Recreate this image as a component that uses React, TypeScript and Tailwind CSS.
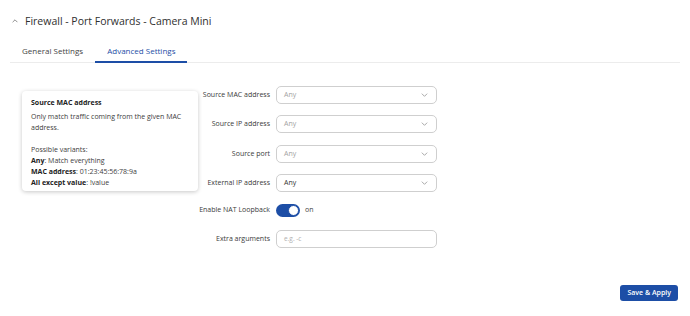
import React from "react";

const font = { fontFamily: '"Open Sans", "Noto Sans", sans-serif' };

function Chevron({ up = false, className = "" }: { up?: boolean; className?: string }) {
  return (
    <svg viewBox="0 0 10 6" className={className} fill="none" stroke="currentColor" strokeWidth="1.1">
      {up ? <polyline points="1,5 5,1 9,5" /> : <polyline points="1,1 5,5 9,1" />}
    </svg>
  );
}

function Select({ value, muted = true }: { value: string; muted?: boolean }) {
  return (
    <div className="flex h-[18px] w-[161px] items-center justify-between rounded-[5px] border border-[#cfcfcf] bg-white pl-[7px] pr-[8px]">
      <span className={`text-[7px] ${muted ? "text-[#a3a3a3]" : "text-[#333]"}`}>{value}</span>
      <Chevron className="h-[4px] w-[7px] text-[#8a8a8a]" />
    </div>
  );
}

function Row({
  label,
  children,
  h = "h-[18px]",
  extra = "",
}: {
  label: string;
  children: React.ReactNode;
  h?: string;
  extra?: string;
}) {
  return (
    <div className={`flex ${h} items-center ${extra}`}>
      <div className="flex w-[72px] shrink-0 justify-end whitespace-nowrap text-[7px] text-[#3a3a3a]">
        {label}
      </div>
      <div className="ml-[6px]">{children}</div>
    </div>
  );
}

export default function App() {
  return (
    <div style={font} className="flex h-[316px] w-[690px] flex-col bg-white text-[#333]">
      {/* Header */}
      <div className="flex items-center pl-[12px] pt-[14px]">
        <Chevron up className="h-[4px] w-[6px] text-[#555]" />
        <span className="ml-[7px] text-[10.5px] leading-[14px] text-[#2f2f2f]">
          Firewall - Port Forwards - Camera Mini
        </span>
      </div>

      {/* Tabs */}
      <div className="mx-[10px] mt-[15px] flex border-b border-[#ececec]">
        <div className="flex h-[19px] items-start px-[12px] pt-[2px] text-[8px] text-[#444]">General Settings</div>
        <div className="-mb-px flex h-[20px] items-start border-b-2 border-[#1d4ea6] px-[12px] pt-[2px] text-[8px] text-[#1d4ea6]">
          Advanced Settings
        </div>
      </div>

      {/* Body */}
      <div className="flex pl-[22px]">
        <div className="mt-[28px] h-[100px] w-[176px] shrink-0 rounded-[4px] bg-white px-[9px] pt-[6px] text-[7px] leading-[11px] text-[#3d3d3d] shadow-[0_1px_4px_rgba(0,0,0,0.22)]">
          <div className="font-bold text-[#222]">Source MAC address</div>
          <div className="mt-[3px]">Only match traffic coming from the given MAC address.</div>
          <div className="mt-[11px]">Possible variants:</div>
          <div>
            <b className="text-[#222]">Any</b>: Match everything
          </div>
          <div>
            <b className="text-[#222]">MAC address</b>: 01:23:45:56:78:9a
          </div>
          <div>
            <b className="text-[#222]">All except value</b>: !value
          </div>
        </div>

        <div className="flex flex-col pt-[23px]">
          <Row label="Source MAC address">
            <Select value="Any" />
          </Row>
          <Row label="Source IP address" extra="mt-[11px]">
            <Select value="Any" />
          </Row>
          <Row label="Source port" extra="mt-[12px]">
            <Select value="Any" />
          </Row>
          <Row label="External IP address" extra="mt-[11px]">
            <Select value="Any" muted={false} />
          </Row>
          <Row label="Enable NAT Loopback" h="h-[14px]" extra="mt-[11px]">
            <div className="flex items-center">
              <div className="flex h-[13px] w-[24px] items-center justify-end rounded-full bg-[#1d4ea6] pr-[1px]">
                <div className="h-[11px] w-[11px] rounded-full border border-[#1d4ea6] bg-white" />
              </div>
              <span className="ml-[5px] text-[7px] text-[#444]">on</span>
            </div>
          </Row>
          <Row label="Extra arguments" extra="mt-[13px]">
            <div className="flex h-[18px] w-[161px] items-center rounded-[5px] border border-[#cfcfcf] bg-white pl-[7px] text-[6.5px] text-[#b0b0b0]">
              e.g. -c
            </div>
          </Row>
        </div>
      </div>

      {/* Footer */}
      <div className="mt-auto flex justify-end pb-[15px] pr-[12px]">
        <button className="h-[16px] rounded-[3px] bg-[#1d4ea6] px-[7px] text-[7px] font-semibold text-white">
          Save &amp; Apply
        </button>
      </div>
    </div>
  );
}
